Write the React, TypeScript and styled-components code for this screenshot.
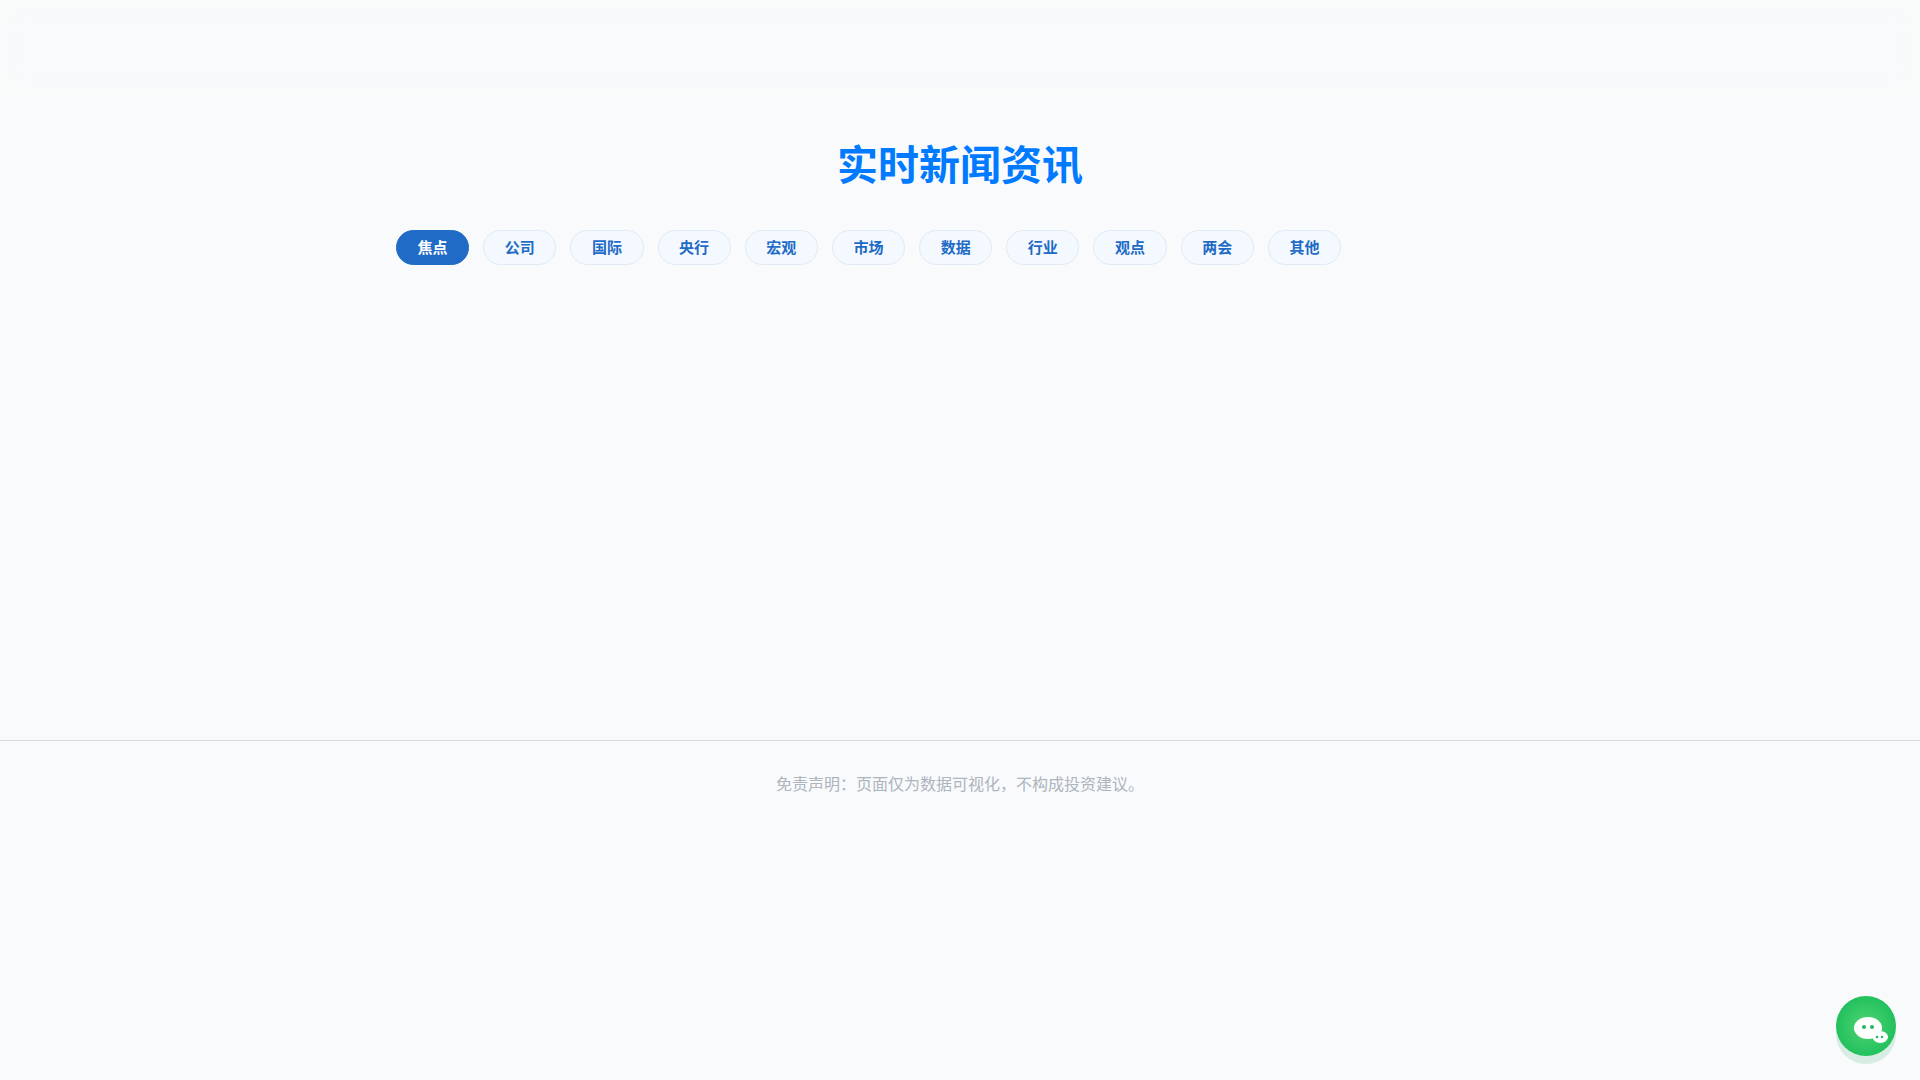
import React, { useState } from "react";
import styled, { createGlobalStyle } from "styled-components";

const GlobalStyle = createGlobalStyle`
  * { box-sizing: border-box; }
  body {
    margin: 0;
    background: #f9fafc;
    font-family: "Liberation Sans", "Noto Sans CJK SC", sans-serif;
  }
`;

const Header = styled.header`
  height: 95px;
  box-shadow: inset 0 0 24px rgba(249, 252, 248, 0.9);
`;

const Main = styled.main`
  max-width: 1200px;
  min-height: 645px;
  margin: 0 auto;
  padding: 41px 36px;
`;

const Title = styled.h1`
  margin: 0 0 34px;
  color: #007bff;
  font-size: 41px;
  line-height: 60px;
  font-weight: 700;
  text-align: center;
`;

const Tabs = styled.nav`
  display: grid;
  grid-template-columns: repeat(11, 1fr);
  gap: 14px;
  max-width: 945px;
`;

const Tab = styled.button<{ $active: boolean }>`
  height: 35px;
  padding: 0;
  border: 1px solid ${(p) => (p.$active ? "#1f6bc6" : "#e0eaf4")};
  border-radius: 18px;
  background: ${(p) => (p.$active ? "#1f6bc6" : "#f4f9ff")};
  color: ${(p) => (p.$active ? "#ffffff" : "#1f6bc6")};
  font-family: inherit;
  font-size: 15px;
  line-height: 22px;
  font-weight: 600;
  white-space: nowrap;
  cursor: pointer;
`;

const Footer = styled.footer`
  padding: 32px 24px;
  border-top: 1px solid #d8d9dd;
  color: #adb5bd;
  font-size: 16px;
  line-height: 24px;
  text-align: center;
`;

const Disclaimer = styled.p`
  margin: 0;
`;

const WechatButton = styled.button`
  position: fixed;
  right: 24px;
  bottom: 24px;
  width: 60px;
  height: 60px;
  padding: 0;
  border: 0;
  border-radius: 50%;
  background: radial-gradient(circle closest-side, #51d572 0%, #22c05e 100%);
  box-shadow: 0 8px 0 rgba(34, 160, 94, 0.15);
  cursor: pointer;

  svg {
    display: block;
  }
`;

const categories = ["焦点", "公司", "国际", "央行", "宏观", "市场", "数据", "行业", "观点", "两会", "其他"];

export default function App() {
  const [active, setActive] = useState("焦点");
  return (
    <>
      <GlobalStyle />
      <Header />
      <Main>
        <Title>实时新闻资讯</Title>
        <Tabs>
          {categories.map((name) => (
            <Tab key={name} type="button" $active={name === active} onClick={() => setActive(name)}>
              {name}
            </Tab>
          ))}
        </Tabs>
      </Main>
      <Footer>
        <Disclaimer>免责声明：页面仅为数据可视化，不构成投资建议。</Disclaimer>
      </Footer>
      <WechatButton type="button" aria-label="微信">
        <svg width="60" height="60" viewBox="0 0 60 60" aria-hidden="true">
          <ellipse cx="32" cy="32" rx="14" ry="11" fill="#fff" />
          <ellipse cx="44.3" cy="41" rx="7.7" ry="6" fill="#fff" />
          <circle cx="28" cy="31" r="2" fill="#22b860" />
          <circle cx="36" cy="31" r="2" fill="#22b860" />
          <circle cx="41" cy="41" r="1.3" fill="#22b860" />
          <circle cx="46" cy="41" r="1.2" fill="#22b860" />
        </svg>
      </WechatButton>
    </>
  );
}
